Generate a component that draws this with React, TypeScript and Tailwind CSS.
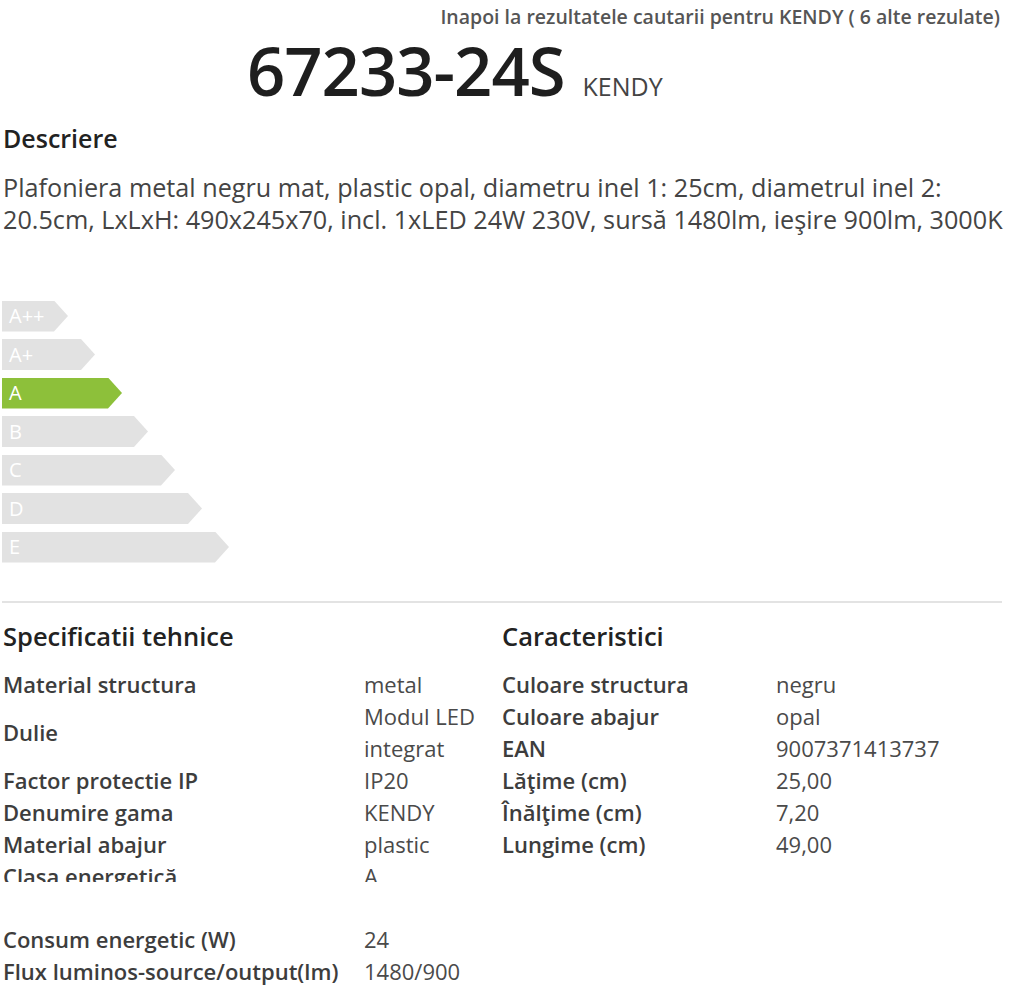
import type { ReactNode } from "react";

const bars = [
  { label: "A++", w: "w-[66px]", active: false },
  { label: "A+", w: "w-[93px]", active: false },
  { label: "A", w: "w-[120px]", active: true },
  { label: "B", w: "w-[146px]", active: false },
  { label: "C", w: "w-[173px]", active: false },
  { label: "D", w: "w-[200px]", active: false },
  { label: "E", w: "w-[227px]", active: false },
];

const tech: [string, ReactNode][] = [
  ["Material structura", "metal"],
  ["Dulie", "Modul LED integrat"],
  ["Factor protectie IP", "IP20"],
  ["Denumire gama", "KENDY"],
  ["Material abajur", "plastic"],
];

const feats: [string, string][] = [
  ["Culoare structura", "negru"],
  ["Culoare abajur", "opal"],
  ["EAN", "9007371413737"],
  ["Lăţime (cm)", "25,00"],
  ["Înălţime (cm)", "7,20"],
  ["Lungime (cm)", "49,00"],
];

function Row({ label, value, cols }: { label: string; value: ReactNode; cols: string }) {
  return (
    <div className={`grid ${cols} items-center leading-[32px]`}>
      <div className="font-semibold text-[#3d3d3d] whitespace-nowrap">{label}</div>
      <div className="text-[#4a4a4a]">{value}</div>
    </div>
  );
}

export default function App() {
  return (
    <div className="min-h-screen bg-white font-['Open_Sans',sans-serif] text-[#444]">
      <div className="ml-[2px] w-[1000px]">
        {/* back link */}
        <div className="flex justify-end pt-[3px] pr-[2px]">
          <a className="text-[19.5px] leading-7 font-semibold text-[#555]">
            Inapoi la rezultatele cautarii pentru KENDY ( 6 alte rezulate)
          </a>
        </div>

        {/* title */}
        <div className="flex items-baseline pl-[245px] mt-[4px]">
          <h1 className="text-[67px] leading-[70px] font-semibold text-[#1e1e1e] tracking-[-1px]">67233-24S</h1>
          <span className="ml-[18px] text-[25px] text-[#444]">KENDY</span>
        </div>

        {/* description */}
        <h2 className="mt-[16px] pl-px text-[25px] leading-8 font-semibold text-[#222]">Descriere</h2>
        <p className="mt-[17px] pl-px w-[1015px] text-[25.2px] leading-8 text-[#444]">
          Plafoniera metal negru mat, plastic opal, diametru inel 1: 25cm, diametrul inel 2: 20.5cm, LxLxH: 490x245x70, incl. 1xLED 24W 230V, sursă 1480lm, ieşire 900lm, 3000K
        </p>

        {/* energy class */}
        <div className="mt-[66px] flex flex-col gap-[7.5px]">
          {bars.map((b) => (
            <div
              key={b.label}
              className={`${b.w} h-[31px] flex items-center pl-[7px] text-[20px] text-white [clip-path:polygon(0_0,calc(100%-14px)_0,100%_50%,calc(100%-14px)_100%,0_100%)] ${
                b.active ? "bg-[#8dc03a]" : "bg-[#e2e2e2]"
              }`}
            >
              {b.label}
            </div>
          ))}
        </div>

        <div className="mt-[38px] h-[2px] bg-[#e3e3e3]" />

        {/* specs */}
        <div className="mt-[17px] grid grid-cols-[500px_500px] text-[22px]">
          <div className="pl-px">
            <h3 className="text-[25.5px] leading-8 font-semibold text-[#222] mb-4">Specificatii tehnice</h3>
            {tech.map(([l, v]) => (
              <Row key={l} label={l} value={v} cols="grid-cols-[361px_137px]" />
            ))}
            <div className="h-[22px] overflow-hidden">
              <Row label="Clasa energetică" value="A" cols="grid-cols-[361px_137px]" />
            </div>
            <div className="h-[41px]" />
            <Row label="Consum energetic (W)" value="24" cols="grid-cols-[361px_137px]" />
            <Row label="Flux luminos-source/output(lm)" value="1480/900" cols="grid-cols-[361px_137px]" />
          </div>
          <div>
            <h3 className="text-[25.5px] leading-8 font-semibold text-[#222] mb-4">Caracteristici</h3>
            {feats.map(([l, v]) => (
              <Row key={l} label={l} value={v} cols="grid-cols-[274px_1fr]" />
            ))}
          </div>
        </div>
      </div>
    </div>
  );
}
